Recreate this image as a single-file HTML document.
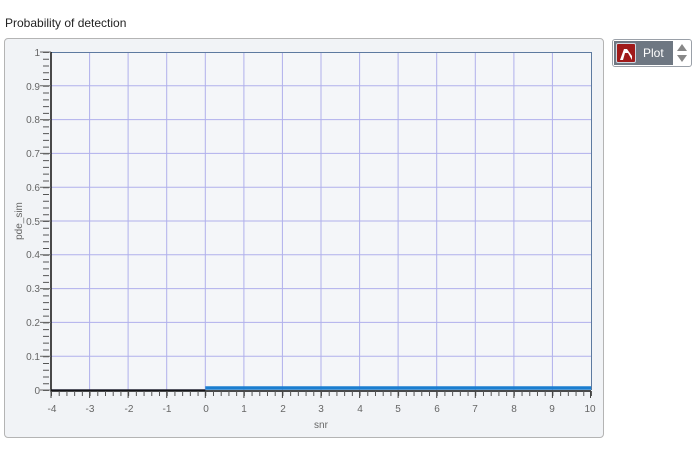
<!DOCTYPE html>
<html><head><style>
body{margin:0;width:700px;height:461px;background:#fff;font-family:"Liberation Sans",sans-serif;position:relative;overflow:hidden}
.title{position:absolute;left:5px;top:16px;font-size:12px;color:#222}
.panel{position:absolute;left:4px;top:38px;width:598px;height:398px;border:1px solid #b4b4b4;border-radius:4px;background:#f1f3f6}
.btn{position:absolute;left:612px;top:39px;width:78px;height:26px;border:1px solid #9aa0a8;border-radius:3px;background:#fff}
.btn .in{position:absolute;left:1px;top:1px;width:59px;height:24px;background:#6e7782}
.btn .ic{position:absolute;left:2px;top:2px;width:18px;height:18px;border:1px solid #cfd6e0;border-radius:2px;background:#a01a1a}
.btn .tx{position:absolute;left:29px;top:5px;color:#fff;font-size:12px}
</style></head><body>
<div class="title">Probability of detection</div>
<div class="panel"></div>
<svg style="position:absolute;left:0;top:0" width="700" height="461" font-family="Liberation Sans, sans-serif" font-size="10" fill="#666">
<rect x="51" y="52" width="540" height="338" fill="#f4f6f9"/>
<g stroke="#b0b0ec" stroke-width="1">
<path d="M89.6 52V390M128.1 52V390M166.7 52V390M205.3 52V390M243.9 52V390M282.4 52V390M321 52V390M359.6 52V390M398.1 52V390M436.7 52V390M475.3 52V390M513.9 52V390M552.4 52V390"/>
<path d="M51 85.8H591M51 119.6H591M51 153.4H591M51 187.2H591M51 221H591M51 254.8H591M51 288.6H591M51 322.4H591M51 356.2H591"/>
</g>
<path d="M51 52.5H591.5V390" stroke="#5d7aa0" fill="none"/>
<path d="M205.3 388H591" stroke="#1b7ed0" stroke-width="3.5"/>
<path d="M51 390H205.3" stroke="#223" stroke-width="1.5"/>
<path d="M51 52V391H591" stroke="#111" stroke-width="1.5" fill="none"/>
<line x1="51" y1="393.5" x2="592" y2="393.5" stroke="#555" stroke-width="5" stroke-dasharray="1 6.714"/>
<line x1="46" y1="52" x2="46" y2="391" stroke="#555" stroke-width="6" stroke-dasharray="1 5.76"/>
<path stroke="#444" d="M51 391V398M89.6 391V398M128.1 391V398M166.7 391V398M205.3 391V398M243.9 391V398M282.4 391V398M321 391V398M359.6 391V398M398.1 391V398M436.7 391V398M475.3 391V398M513.9 391V398M552.4 391V398M590.5 391V398"/>
<path stroke="#666" d="M40 390H51M40 356.2H51M40 322.4H51M40 288.6H51M40 254.8H51M40 221H51M40 187.2H51M40 153.4H51M40 119.6H51M40 85.8H51M40 52H51"/>
<g text-anchor="middle">
<text x="52" y="412">-4</text><text x="90" y="412">-3</text><text x="129" y="412">-2</text><text x="167" y="412">-1</text><text x="206" y="412">0</text><text x="244" y="412">1</text><text x="283" y="412">2</text><text x="321" y="412">3</text><text x="360" y="412">4</text><text x="398" y="412">5</text><text x="437" y="412">6</text><text x="475" y="412">7</text><text x="514" y="412">8</text><text x="552" y="412">9</text><text x="590" y="412">10</text>
<text x="321" y="428">snr</text>
</g>
<g text-anchor="end">
<text x="40" y="394">0</text><text x="40" y="360">0.1</text><text x="40" y="326">0.2</text><text x="40" y="292">0.3</text><text x="40" y="258">0.4</text><text x="40" y="225">0.5</text><text x="40" y="191">0.6</text><text x="40" y="157">0.7</text><text x="40" y="123">0.8</text><text x="40" y="90">0.9</text><text x="40" y="56">1</text>
</g>
<text transform="translate(22,221) rotate(-90)" text-anchor="middle">pde_sim</text>
</svg>
<div class="btn"><div class="in"><div class="ic"><svg width="18" height="18"><path d="M3 16L7 5L10 5L15 12L15 16L11 9L8 9L6 16Z" fill="#fff"/></svg></div><div class="tx">Plot</div></div>
<svg style="position:absolute;left:63px;top:2px" width="12" height="22"><path d="M6 2L11 9H1Z M6 20L11 13H1Z" fill="#888"/></svg></div>
</body></html>
